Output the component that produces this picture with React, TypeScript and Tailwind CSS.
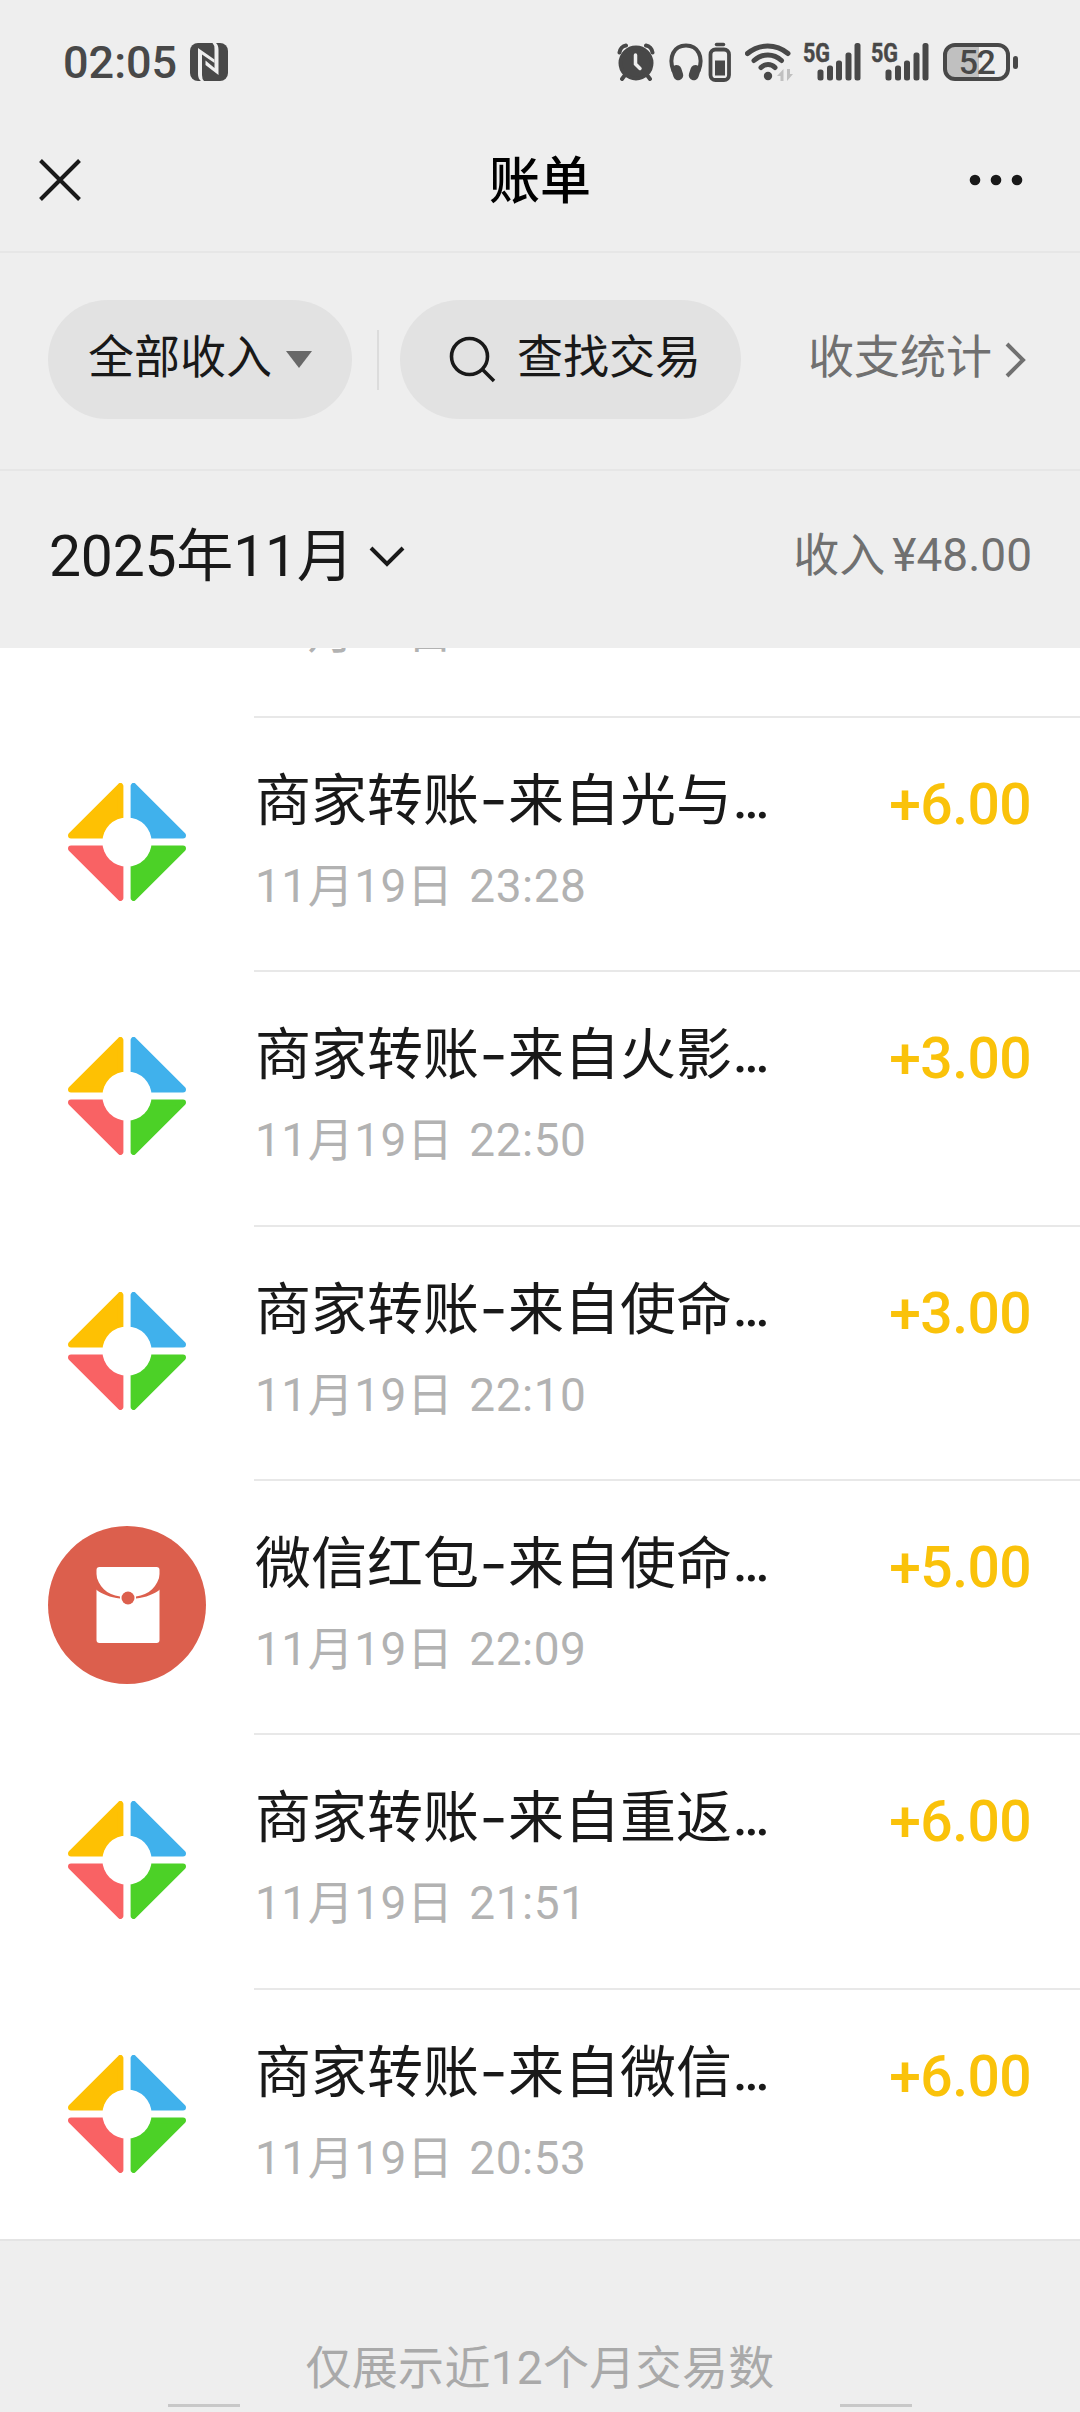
import type { ReactNode } from 'react';

type Bill = {
  kind: 'transfer' | 'redpacket';
  title: string;
  from: string;
  date: string;
  amount: string;
};

const bills: Bill[] = [
  { kind: 'transfer', title: '商家转账', from: '来自光与', date: '11月19日 23:28', amount: '+6.00' },
  { kind: 'transfer', title: '商家转账', from: '来自火影', date: '11月19日 22:50', amount: '+3.00' },
  { kind: 'transfer', title: '商家转账', from: '来自使命', date: '11月19日 22:10', amount: '+3.00' },
  { kind: 'redpacket', title: '微信红包', from: '来自使命', date: '11月19日 22:09', amount: '+5.00' },
  { kind: 'transfer', title: '商家转账', from: '来自重返', date: '11月19日 21:51', amount: '+6.00' },
  { kind: 'transfer', title: '商家转账', from: '来自微信', date: '11月19日 20:53', amount: '+6.00' },
];

function TransferIcon() {
  return (
    <svg width="118" height="118" viewBox="-59 -59 118 118">
      <g strokeWidth="6" strokeLinejoin="round">
        <path d="M-6.6 -56V-6.6H-56Z" fill="#fec103" stroke="#fec103" />
        <path d="M6.6 -56V-6.6H56Z" fill="#40b1ec" stroke="#40b1ec" />
        <path d="M-6.6 56V6.6H-56Z" fill="#f96264" stroke="#f96264" />
        <path d="M6.6 56V6.6H56Z" fill="#4cd127" stroke="#4cd127" />
      </g>
      <circle r="24.6" fill="#fff" />
    </svg>
  );
}

function RedPacketIcon() {
  return (
    <svg width="158" height="158" viewBox="0 0 158 158">
      <circle cx="79" cy="79" r="79" fill="#dc5f4d" />
      <rect x="48.5" y="41" width="63" height="76" rx="3" fill="#fff" />
      <path
        d="M48 48C50 60 59 69 72 70.500V72.500C62 71.500 54 68 48 63.500ZM112 48C110 60 101 69 88 70.500V72.500C98 71.500 106 68 112 63.500Z"
        fill="#dc5f4d"
      />
      <circle cx="80" cy="72" r="6.500" fill="#dc5f4d" />
    </svg>
  );
}

function BillDate({ children }: { children: ReactNode }) {
  return (
    <p className="pl-px text-[46px] leading-[66px] tracking-[0.5px] text-[#b2b2b2] [word-spacing:4px]">{children}</p>
  );
}

function BillRow({ bill }: { bill: Bill }) {
  return (
    <li className="flex h-[254.4px] shrink-0 last:-mb-[3.2px]">
      <div className="flex w-[254px] shrink-0 items-center justify-center pb-[2px]">
        {bill.kind === 'transfer' ? <TransferIcon /> : <RedPacketIcon />}
      </div>
      <div className="flex flex-1 justify-between border-t-2 border-[#e8e8e8] pt-[44px] pr-[49px]">
        <div>
          <h2 className="flex h-[78px] items-center pl-px text-[56px] text-[#191919]">
            {bill.title}
            <span className="w-[29px] scale-x-115 pb-[2px] text-center font-[Inter] text-[54px]">-</span>
            {bill.from}
            <span className="ml-px text-[51px] font-medium">…</span>
          </h2>
          <div className="mt-[13px]">
            <BillDate>{bill.date}</BillDate>
          </div>
        </div>
        <p className="pt-[4px] text-[57px] leading-[78px] font-medium tracking-[-0.6px] text-[#fac20a]">{bill.amount}</p>
      </div>
    </li>
  );
}

function Signal() {
  return (
    <svg className="overflow-visible" width="57" height="40" viewBox="0 0 57 40" fill="#484848">
      <text x="-1" y="20" fontSize="26" fontWeight="700" textLength="27" lengthAdjust="spacingAndGlyphs" stroke="#484848" strokeWidth="0.500">
        5G
      </text>
      <rect x="13.500" y="27.500" width="6" height="11" rx="2.500" />
      <rect x="23" y="23.500" width="6" height="15" rx="2.500" />
      <rect x="32" y="18.500" width="6" height="20" rx="2.500" />
      <rect x="41.500" y="10.500" width="6" height="28" rx="2.500" />
      <rect x="50.500" y="1" width="6" height="37.500" rx="2.500" />
    </svg>
  );
}

function StatusBar() {
  return (
    <div className="flex h-[110px] items-center pt-[14px] pr-[62px] pl-[63px] text-[#484848]">
      <span className="text-[45px] leading-none font-medium">02:05</span>
      <svg className="ml-[13px]" width="38" height="38" viewBox="0 0 38 38">
        <rect width="38" height="38" rx="8" fill="#484848" />
        <g fill="#eee">
          <path d="M8 5L24.500 16.500V20L12 11.500V32Q12 36 14 38H11Q8 36 8 31Z" />
          <path d="M28.500 32L15.500 22V17.500L24.500 25V6Q24.500 2 22.500 0H26Q28.500 2 28.500 7Z" />
        </g>
      </svg>
      <div className="ml-auto flex items-center">
        {/* alarm */}
        <svg width="38" height="38" viewBox="0 0 38 38" fill="none" stroke="#484848" strokeWidth="4" strokeLinecap="round">
          <path d="M2.500 9.500C3 6 5.500 3 9 2.500M35.500 9.500C35 6 32.500 3 29 2.500M8 32L5 36M30 32L33 36" />
          <circle cx="19" cy="20" r="15.500" fill="#484848" />
          <path d="M18.500 12V21L23 25.500" stroke="#eee" strokeWidth="3.500" />
        </svg>
        {/* headphones and their battery */}
        <svg className="ml-[14px]" width="62" height="40" viewBox="0 0 62 40" fill="none" stroke="#484848">
          <path d="M4.500 29C-1 15 5 3.500 17 3.500S35 15 29.500 29" strokeWidth="4" />
          <rect x="3.500" y="23" width="10" height="15.500" rx="5" transform="rotate(-18 8 31)" fill="#484848" stroke="none" />
          <rect x="20.500" y="23" width="10" height="15.500" rx="5" transform="rotate(18 26 31)" fill="#484848" stroke="none" />
          <rect x="41.500" y="7.500" width="18.500" height="30.500" rx="5" strokeWidth="3.800" />
          <path d="M47.500 2.500H54.500" strokeWidth="3.500" strokeLinecap="round" />
          <rect x="46" y="18.500" width="10" height="15" fill="#484848" stroke="none" />
        </svg>
        {/* wifi */}
        <svg className="ml-[14px]" width="48" height="38" viewBox="0 0 48 38" fill="none" stroke="#484848" strokeWidth="5" strokeLinecap="round">
          <path d="M2.500 10.500C14 .500 31 .500 43 10.500M9 17.500C17.500 10 28.500 10 36.500 17.500M16 24.500C20 20.500 26 20.500 30 24.500" />
          <circle cx="23" cy="33" r="4.200" fill="#484848" stroke="none" />
          <path d="M32 33L38.500 26V38H35.500V33ZM48 31L42 38V26H45V31Z" fill="#c0c0c0" stroke="none" />
        </svg>
        <div className="ml-[11px] flex gap-[11px]">
          <Signal />
          <Signal />
        </div>
        {/* battery */}
        <div className="ml-[14px] flex items-center gap-[3px]">
          <div className="flex h-[38px] w-[67px] items-center justify-center rounded-[12px] border-[4px] border-[#484848] bg-linear-to-r from-[#c0c0c0] from-55% to-[#eee] to-55% text-[34px] leading-[30px] font-medium tracking-[-1.5px]">
            52
          </div>
          <div className="h-[13px] w-[5px] rounded-full bg-[#484848]" />
        </div>
      </div>
    </div>
  );
}

function Pill({ children, className }: { children: ReactNode; className: string }) {
  return (
    <button className={`flex h-[119px] items-center rounded-full bg-[#e2e2e2] text-[46px] text-[#191919] ${className}`}>
      {children}
    </button>
  );
}

export default function App() {
  return (
    <div className="flex h-[2412px] w-[1080px] flex-col overflow-hidden bg-[#eee] font-[Roboto,'Noto_Sans_CJK_SC',sans-serif]">
      <StatusBar />

      {/* Title bar */}
      <header className="flex h-[143px] items-center justify-between border-b-2 border-[#e6e6e6] pr-[57px] pb-px pl-[39px]">
        <div className="w-[72px]">
          <svg width="42" height="42" viewBox="0 0 42 42" stroke="#191919" strokeWidth="4">
            <path d="M1.500 1.500L40.500 40.500M40.500 1.500L1.500 40.500" />
          </svg>
        </div>
        <h1 className="pt-[5px] text-[51px] font-medium text-black">账单</h1>
        <svg width="54" height="12" viewBox="0 0 54 12" fill="#191919">
          <circle cx="6" cy="6" r="5.300" />
          <circle cx="27" cy="6" r="5.300" />
          <circle cx="48" cy="6" r="5.300" />
        </svg>
      </header>

      {/* Filters */}
      <div className="flex h-[218px] items-center border-b-2 border-[#e6e6e6] pr-[53px] pb-[3px] pl-12">
        <Pill className="w-[304px] pl-10">
          <span className="pb-[4px]">全部收入</span>
          <svg className="ml-[14px]" width="26" height="17" viewBox="0 0 26 17">
            <path d="M0 0H26L13 17Z" fill="#686868" />
          </svg>
        </Pill>
        <div className="ml-[25px] h-[60px] w-[2px] bg-[#dcdcdc]" />
        <Pill className="ml-[21px] w-[341px] pl-[49px]">
          <svg width="47" height="47" viewBox="0 0 47 47" fill="none" stroke="#191919" strokeWidth="3.600">
            <circle cx="20.500" cy="20.500" r="18" />
            <path d="M33 33L45 45" />
          </svg>
          <span className="ml-[21px] pb-[4px]">查找交易</span>
        </Pill>
        <div className="ml-auto flex items-center text-[46px] text-[#707070]">
          <span className="pb-[4px]">收支统计</span>
          <svg className="ml-[13px]" width="22" height="36" viewBox="0 0 22 36" fill="none" stroke="#707070" strokeWidth="4">
            <path d="M2 2L18 18L2 34" />
          </svg>
        </div>
      </div>

      {/* Month summary */}
      <div className="flex h-[177px] items-center justify-between pr-12 pb-[6px] pl-[49px]">
        <div className="flex items-center text-[57px] text-[#191919]">
          <span className="tracking-[-0.2px]">2025年11月</span>
          <svg className="ml-[15px]" width="36" height="22" viewBox="0 0 36 22" fill="none" stroke="#191919" strokeWidth="4">
            <path d="M2 2L18 18L34 2" />
          </svg>
        </div>
        <p className="pb-[2px] text-[46px] text-[#707070]">
          收入<span className="ml-[7px]">¥48.00</span>
        </p>
      </div>

      {/* Bill list, scrolled so that only the foot of the first row shows */}
      <ul className="flex h-[1593px] shrink-0 flex-col justify-end overflow-hidden border-b-2 border-[#e4e4e4] bg-white">
        <li className="flex shrink-0 flex-col justify-end pb-[50.4px] pl-[254px]">
          <BillDate>11月19日 23:31</BillDate>
        </li>
        {bills.map((bill) => (
          <BillRow key={bill.date} bill={bill} />
        ))}
      </ul>

      <footer className="flex flex-1 flex-col items-center text-[46px] text-[#a9a9a9]">
        <p className="mt-[94px] leading-[66px] tracking-[0.3px]">仅展示近12个月交易数</p>
        <div className="mt-[3px] flex w-[744px] justify-between">
          <div className="h-[3px] w-[72px] bg-[#c8c8c8]" />
          <div className="h-[3px] w-[72px] bg-[#c8c8c8]" />
        </div>
      </footer>
    </div>
  );
}
